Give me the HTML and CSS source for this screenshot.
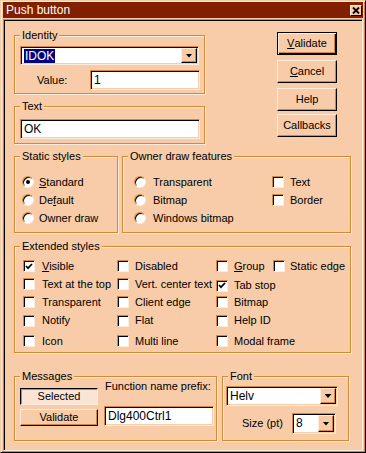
FILE: index.html
```html
<!DOCTYPE html>
<html lang="en">
<head>
    <meta charset="UTF-8">
    <meta name="viewport" content="width=device-width, initial-scale=1.0">
    <link rel="stylesheet" href="styles.css">
    <title>Push button</title>
</head>
<body>
    <div class="window">
        <div class="titlebar">
            <span class="title">Push button</span>
            <span class="close">
                <svg width="8" height="7" viewBox="0 0 8 7"><path d="M1 0.5L7 6.5M7 0.5L1 6.5" stroke="#000" stroke-width="1.8"/></svg>
            </span>
        </div>

        <div class="client">
            <!-- Identity / Text and the action buttons -->
            <div class="top-row">
                <div class="left-col">
                    <div class="group identity">
                        <span class="group-label">Identity</span>
                        <div class="combo id-combo">
                            <span class="combo-val"><span class="sel">IDOK</span></span>
                            <span class="drop"><i class="arrow"></i></span>
                        </div>
                        <div class="value-row">
                            <span class="value-label">Value:</span>
                            <div class="field value-field">1</div>
                        </div>
                    </div>
                    <div class="group text-group">
                        <span class="group-label">Text</span>
                        <div class="field text-field">OK</div>
                    </div>
                </div>
                <div class="right-col">
                    <div class="btn default"><u>V</u>alidate</div>
                    <div class="btn cancel"><u>C</u>ancel</div>
                    <div class="btn help">Help</div>
                    <div class="btn callbacks">Callbacks</div>
                </div>
            </div>

            <!-- Static styles / Owner draw -->
            <div class="mid-row">
                <div class="group static">
                    <span class="group-label">Static styles</span>
                    <div class="opt"><span class="radio on"></span><span class="lbl radio-lbl"><u>S</u>tandard</span></div>
                    <div class="opt"><span class="radio"></span><span class="lbl radio-lbl">De<u>f</u>ault</span></div>
                    <div class="opt"><span class="radio"></span><span class="lbl radio-lbl">Owner draw</span></div>
                </div>
                <div class="group owner">
                    <span class="group-label">Owner draw features</span>
                    <div class="opt"><span class="radio"></span><span class="lbl owner-lbl">Transparent</span></div>
                    <div class="opt"><span class="check"></span><span class="lbl">Text</span></div>
                    <div class="opt"><span class="radio"></span><span class="lbl owner-lbl">Bitmap</span></div>
                    <div class="opt"><span class="check"></span><span class="lbl">Border</span></div>
                    <div class="opt"><span class="radio"></span><span class="lbl owner-lbl">Windows bitmap</span></div>
                </div>
            </div>

            <!-- Extended styles -->
            <div class="group extended">
                <span class="group-label">Extended styles</span>
                <div class="opt"><span class="check"><svg width="8" height="7" viewBox="0 0 8 7"><path d="M1 3L3 5.2L7 1" fill="none" stroke="#000" stroke-width="1.7"/></svg></span><span class="lbl first"><u>V</u>isible</span></div>
                <div class="opt"><span class="check"></span><span class="lbl">Disabled</span></div>
                <div class="opt"><span class="check"></span><span class="lbl"><u>G</u>roup</span></div>
                <div class="opt"><span class="check"></span><span class="lbl last">Static edge</span></div>

                <div class="opt"><span class="check"></span><span class="lbl first">Text at the top</span></div>
                <div class="opt"><span class="check"></span><span class="lbl">Vert. center text</span></div>
                <div class="opt tab"><span class="check"><svg width="8" height="7" viewBox="0 0 8 7"><path d="M1 3L3 5.2L7 1" fill="none" stroke="#000" stroke-width="1.7"/></svg></span><span class="lbl">Tab stop</span></div>
                <span></span>

                <div class="opt"><span class="check"></span><span class="lbl first">Transparent</span></div>
                <div class="opt"><span class="check"></span><span class="lbl">Client edge</span></div>
                <div class="opt"><span class="check"></span><span class="lbl">Bitmap</span></div>
                <span></span>

                <div class="opt"><span class="check"></span><span class="lbl first">Notify</span></div>
                <div class="opt"><span class="check"></span><span class="lbl">Flat</span></div>
                <div class="opt"><span class="check"></span><span class="lbl">Help ID</span></div>
                <span></span>

                <div class="opt"><span class="check"></span><span class="lbl first">Icon</span></div>
                <div class="opt"><span class="check"></span><span class="lbl">Multi line</span></div>
                <div class="opt"><span class="check"></span><span class="lbl">Modal frame</span></div>
                <span></span>
            </div>

            <!-- Messages / Font -->
            <div class="bottom-row">
                <div class="group messages">
                    <span class="group-label">Messages</span>
                    <div class="msg-btns">
                        <div class="btn small pressed">Selected</div>
                        <div class="btn small">Validate</div>
                    </div>
                    <div class="prefix">
                        <div class="prefix-label">Function name prefix:</div>
                        <div class="field prefix-field">Dlg400Ctrl1</div>
                    </div>
                </div>
                <div class="group font">
                    <span class="group-label">Font</span>
                    <div class="combo font-combo">
                        <span class="combo-val">Helv</span>
                        <span class="drop"><i class="arrow"></i></span>
                    </div>
                    <div class="size-row">
                        <span class="size-label">Size (pt)</span>
                        <div class="combo size-combo">
                            <span class="combo-val">8</span>
                            <span class="drop"><i class="arrow"></i></span>
                        </div>
                    </div>
                </div>
            </div>
        </div>
    </div>
</body>
</html>
```

FILE: styles.css
```css
* {
    box-sizing: border-box;
}

body {
    margin: 0;
    font-family: 'Liberation Sans', Arial, sans-serif;
    font-size: 11px;
    line-height: 13px;
    color: #000;
    background-color: #f8cca8;
}

.window {
    width: 366px;
    height: 453px;
    overflow: hidden;
    background-color: #f8cca8;
    border: 1px solid;
    border-color: #f8cca8 #000 #000 #f8cca8;
    box-shadow: inset 1px 1px 0 #fcecdc, inset -1px -1px 0 #d88830;
    padding: 1px 2px 2px 2px;
}

.titlebar {
    height: 16px;
    background-color: #802000;
    color: #fff;
    display: flex;
    align-items: center;
    justify-content: space-between;
    padding: 0 1px 0 3px;
    font-size: 12px;
}

.close {
    width: 12px;
    height: 11px;
    background-color: #f8cca8;
    border: 1px solid;
    border-color: #fcecdc #000 #000 #fcecdc;
    display: flex;
    align-items: center;
    justify-content: center;
}

.client {
    margin-top: 1px;
    height: 432px;
    border: 1px solid;
    border-color: #d88830 #fcecdc #fcecdc #d88830;
    box-shadow: inset 1px 1px 0 #000;
    padding: 1px 0 0 10px;
}

/* group boxes */
.group {
    position: relative;
    border: 1px solid #d88830;
    box-shadow: inset 1px 1px 0 #fcecdc, 1px 1px 0 #fcecdc;
}

.group-label {
    position: absolute;
    top: -7px;
    left: 5px;
    padding: 0 2px;
    background-color: #f8cca8;
    white-space: nowrap;
}

/* sunken edit field */
.field {
    background-color: #fff;
    border: 1px solid;
    border-color: #d88830 #fcecdc #fcecdc #d88830;
    box-shadow: inset 1px 1px 0 #000, inset -1px -1px 0 #f8cca8;
    padding-left: 3px;
    display: flex;
    align-items: center;
    font-size: 12px;
}

.combo {
    display: flex;
    background-color: #fff;
    border: 1px solid;
    border-color: #d88830 #fcecdc #fcecdc #d88830;
    box-shadow: inset 1px 1px 0 #000, inset -1px -1px 0 #f8cca8;
    padding: 1px;
    font-size: 12px;
}

.combo-val {
    flex: 1;
    display: flex;
    align-items: center;
    padding-left: 2px;
}

.sel {
    background-color: #000080;
    color: #fff;
    padding: 0 1px;
    line-height: 14px;
}

.drop {
    width: 16px;
    background-color: #f8cca8;
    border: 1px solid;
    border-color: #fcecdc #000 #000 #fcecdc;
    box-shadow: inset -1px -1px 0 #d88830;
    display: flex;
    align-items: center;
    justify-content: center;
}

.arrow {
    width: 7px;
    height: 4px;
    background-color: #000;
    clip-path: polygon(0 0, 100% 0, 50% 100%);
}

/* buttons */
.btn {
    width: 60px;
    height: 23px;
    background-color: #f8cca8;
    border: 1px solid;
    border-color: #fcecdc #000 #000 #fcecdc;
    box-shadow: inset -1px -1px 0 #d88830;
    display: flex;
    align-items: center;
    justify-content: center;
}

.btn.default {
    border-color: #000;
    box-shadow: inset 1px 1px 0 #fcecdc, inset -1px -1px 0 #000, inset -2px -2px 0 #d88830;
}

.btn.cancel,
.btn.help {
    margin-top: 5px;
}

.btn.callbacks {
    margin-top: 3px;
}

.btn.small {
    width: 78px;
    height: 17px;
}

.btn.pressed {
    background-color: #fce4d4;
    border-color: #000 #fcecdc #fcecdc #000;
    box-shadow: inset 1px 1px 0 #d88830;
}

/* radios and checkboxes */
.opt {
    display: flex;
    align-items: center;
    height: 18px;
    white-space: nowrap;
}

.lbl {
    margin-left: 6px;
}

.radio-lbl {
    margin-left: 5px;
}

.owner-lbl {
    margin-left: 7px;
}

.lbl.first {
    margin-left: 7px;
}

.lbl.last {
    margin-left: 5px;
}

.radio {
    position: relative;
    width: 12px;
    height: 12px;
    flex: none;
    border-radius: 50%;
    background-color: #fff;
    border: 1px solid;
    border-color: #d88830 #fcecdc #fcecdc #d88830;
    box-shadow: inset 1px 1px 0 #000;
}

.radio.on::after {
    content: "";
    position: absolute;
    top: 3px;
    left: 3px;
    width: 4px;
    height: 4px;
    border-radius: 50%;
    background-color: #000;
}

.check {
    width: 12px;
    height: 12px;
    flex: none;
    background-color: #fff;
    border: 1px solid;
    border-color: #d88830 #fcecdc #fcecdc #d88830;
    box-shadow: inset 1px 1px 0 #000;
    display: flex;
    align-items: center;
    justify-content: center;
}

/* layout */
.top-row {
    display: flex;
    align-items: flex-start;
}

.left-col {
    margin-top: 14px;
    width: 191px;
}

.identity {
    height: 59px;
    padding: 10px 0 0 5px;
}

.id-combo {
    width: 179px;
    height: 19px;
}

.value-row {
    display: flex;
    align-items: center;
    width: 180px;
    margin-top: 5px;
}

.value-label {
    margin-left: 17px;
}

.value-field {
    margin-left: auto;
    width: 110px;
    height: 20px;
}

.text-group {
    margin-top: 12px;
    height: 38px;
    padding: 12px 0 0 5px;
}

.text-field {
    width: 180px;
    height: 20px;
}

.right-col {
    margin-top: 11px;
    margin-left: 72px;
}

.mid-row {
    display: flex;
    margin-top: 12px;
}

.static {
    width: 104px;
    height: 77px;
    padding: 16px 0 0 7px;
}

.owner {
    margin-left: 4px;
    width: 229px;
    height: 77px;
    padding: 16px 0 0 11px;
    display: grid;
    grid-template-columns: 138px auto;
    grid-auto-rows: 18px;
    align-content: start;
}

.extended {
    margin-top: 13px;
    width: 337px;
    height: 107px;
    padding: 10px 0 0 8px;
    display: grid;
    grid-template-columns: 94px 99px 57px auto;
    grid-template-rows: 18px 18px 18px 19px 22px;
}

.extended .opt {
    height: auto;
}

.extended .tab {
    margin-top: 3px;
}

.bottom-row {
    display: flex;
    margin-top: 23px;
}

.messages {
    width: 203px;
    height: 65px;
    padding: 3px 0 0 5px;
    display: flex;
}

.msg-btns {
    margin-top: 8px;
    display: flex;
    flex-direction: column;
    gap: 4px;
}

.prefix {
    margin-left: 6px;
}

.prefix-label {
    white-space: nowrap;
    padding-left: 1px;
}

.prefix-field {
    margin-top: 13px;
    width: 110px;
    height: 20px;
}

.font {
    margin-left: 5px;
    width: 127px;
    height: 65px;
    padding: 9px 0 0 3px;
}

.font-combo {
    width: 112px;
    height: 20px;
}

.size-row {
    display: flex;
    align-items: center;
    width: 110px;
    margin-top: 7px;
}

.size-label {
    margin-left: 16px;
}

.size-combo {
    margin-left: auto;
    width: 44px;
    height: 21px;
}
```
